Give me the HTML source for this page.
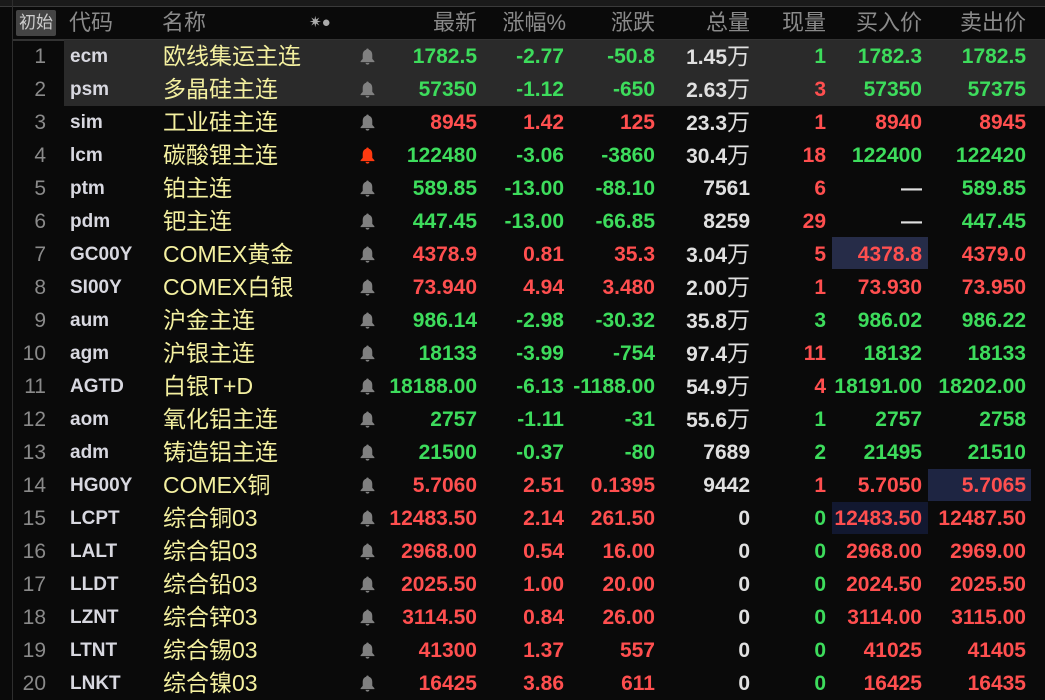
<!DOCTYPE html>
<html><head><meta charset="utf-8"><style>
body{margin:0;width:1045px;height:700px;background:#0a0a0a;overflow:hidden;position:relative;font-family:"Liberation Sans","Noto Sans CJK SC",sans-serif}
.top{position:absolute;left:0;top:0;width:1045px;height:6px;background:#1a1a1a;border-bottom:1px solid #3a3a3a}
.vl{position:absolute;left:12px;top:0;width:1px;height:700px;background:#2e2e2e}
.hd{position:absolute;top:7px;height:32px;left:13px;right:0;border-bottom:2px solid #333;color:#8a8a8a;font-size:22px}
.hd span{position:absolute;top:2px;line-height:28px}
.btn{left:3px;top:3px!important;background:#444;color:#ccc;font-size:17px;padding:0 3px;border-radius:2px;line-height:26px!important}
.r{position:absolute;left:13px;right:0;height:33px;font-size:21px;font-weight:bold}
.r span{position:absolute;top:0;line-height:33px;white-space:nowrap}
.n{right:calc(100% - 33px);color:#8a8a8a;font-weight:normal}
.c{left:57px;color:#d8d8e0;font-size:19px}
.m{left:150px;color:#f4f0a0;font-weight:normal;font-size:23px}
.b{left:347px;top:8px!important;line-height:0!important}
.a{right:568px}.p{right:481px}.d{right:390px}.v{right:295px;color:#e0e0e0}.v i{font-style:normal;font-weight:normal;font-size:23px}
.q{right:219px}.y{right:123px}.s{right:19px}
.G{color:#3ddc5c}.R{color:#ff4f4f}.W{color:#e0e0e0}
.box{position:absolute;height:32px}
</style></head><body>
<div class="top"></div><div class="vl"></div>
<div class="hd">
<span class="btn">初始</span><span style="left:56px">代码</span><span style="left:149px">名称</span>
<span style="left:296px;font-size:15px;color:#aaa">✷●</span>
<span style="right:568px">最新</span><span style="right:479px">涨幅%</span><span style="right:390px">涨跌</span><span style="right:295px">总量</span><span style="right:219px">现量</span><span style="right:123px">买入价</span><span style="right:19px">卖出价</span>
</div>
<div class="box" style="left:64px;top:40px;width:981px;height:66px;background:#2a2a2a"></div>
<div class="box" style="left:832px;top:237px;width:96px;background:#262c48"></div>
<div class="box" style="left:928px;top:469px;width:103px;background:#1e2542"></div>
<div class="box" style="left:832px;top:502px;width:96px;background:#121830"></div>
<svg width="0" height="0" style="position:absolute"><defs><symbol id="bell" viewBox="0 0 14 16"><path d="M7 0.5c0.8 0 1.2 0.6 1.2 1.2 2.3 0.6 3.3 2.5 3.3 5v3.5l2 2.3v0.8H0.5v-0.8l2-2.3V6.7c0-2.5 1-4.4 3.3-5C5.8 1.1 6.2 0.5 7 0.5zM5.2 14h3.6c0 1-0.8 1.6-1.8 1.6S5.2 15 5.2 14z"/></symbol></defs></svg>

<div class="r" style="top:40px"><span class="n">1</span><span class="c">ecm</span><span class="m">欧线集运主连</span><span class="b"><svg width="15" height="17" fill="#808080"><use href="#bell"/></svg></span><span class="a G">1782.5</span><span class="p G">-2.77</span><span class="d G">-50.8</span><span class="v">1.45<i>万</i></span><span class="q G">1</span><span class="y G">1782.3</span><span class="s G">1782.5</span></div>
<div class="r" style="top:73px"><span class="n">2</span><span class="c">psm</span><span class="m">多晶硅主连</span><span class="b"><svg width="15" height="17" fill="#808080"><use href="#bell"/></svg></span><span class="a G">57350</span><span class="p G">-1.12</span><span class="d G">-650</span><span class="v">2.63<i>万</i></span><span class="q R">3</span><span class="y G">57350</span><span class="s G">57375</span></div>
<div class="r" style="top:106px"><span class="n">3</span><span class="c">sim</span><span class="m">工业硅主连</span><span class="b"><svg width="15" height="17" fill="#808080"><use href="#bell"/></svg></span><span class="a R">8945</span><span class="p R">1.42</span><span class="d R">125</span><span class="v">23.3<i>万</i></span><span class="q R">1</span><span class="y R">8940</span><span class="s R">8945</span></div>
<div class="r" style="top:139px"><span class="n">4</span><span class="c">lcm</span><span class="m">碳酸锂主连</span><span class="b"><svg width="15" height="17" fill="#ff3a10"><use href="#bell"/></svg></span><span class="a G">122480</span><span class="p G">-3.06</span><span class="d G">-3860</span><span class="v">30.4<i>万</i></span><span class="q R">18</span><span class="y G">122400</span><span class="s G">122420</span></div>
<div class="r" style="top:172px"><span class="n">5</span><span class="c">ptm</span><span class="m">铂主连</span><span class="b"><svg width="15" height="17" fill="#808080"><use href="#bell"/></svg></span><span class="a G">589.85</span><span class="p G">-13.00</span><span class="d G">-88.10</span><span class="v">7561</span><span class="q R">6</span><span class="y W">—</span><span class="s G">589.85</span></div>
<div class="r" style="top:205px"><span class="n">6</span><span class="c">pdm</span><span class="m">钯主连</span><span class="b"><svg width="15" height="17" fill="#808080"><use href="#bell"/></svg></span><span class="a G">447.45</span><span class="p G">-13.00</span><span class="d G">-66.85</span><span class="v">8259</span><span class="q R">29</span><span class="y W">—</span><span class="s G">447.45</span></div>
<div class="r" style="top:238px"><span class="n">7</span><span class="c">GC00Y</span><span class="m">COMEX黄金</span><span class="b"><svg width="15" height="17" fill="#808080"><use href="#bell"/></svg></span><span class="a R">4378.9</span><span class="p R">0.81</span><span class="d R">35.3</span><span class="v">3.04<i>万</i></span><span class="q R">5</span><span class="y R">4378.8</span><span class="s R">4379.0</span></div>
<div class="r" style="top:271px"><span class="n">8</span><span class="c">SI00Y</span><span class="m">COMEX白银</span><span class="b"><svg width="15" height="17" fill="#808080"><use href="#bell"/></svg></span><span class="a R">73.940</span><span class="p R">4.94</span><span class="d R">3.480</span><span class="v">2.00<i>万</i></span><span class="q R">1</span><span class="y R">73.930</span><span class="s R">73.950</span></div>
<div class="r" style="top:304px"><span class="n">9</span><span class="c">aum</span><span class="m">沪金主连</span><span class="b"><svg width="15" height="17" fill="#808080"><use href="#bell"/></svg></span><span class="a G">986.14</span><span class="p G">-2.98</span><span class="d G">-30.32</span><span class="v">35.8<i>万</i></span><span class="q G">3</span><span class="y G">986.02</span><span class="s G">986.22</span></div>
<div class="r" style="top:337px"><span class="n">10</span><span class="c">agm</span><span class="m">沪银主连</span><span class="b"><svg width="15" height="17" fill="#808080"><use href="#bell"/></svg></span><span class="a G">18133</span><span class="p G">-3.99</span><span class="d G">-754</span><span class="v">97.4<i>万</i></span><span class="q R">11</span><span class="y G">18132</span><span class="s G">18133</span></div>
<div class="r" style="top:370px"><span class="n">11</span><span class="c">AGTD</span><span class="m">白银T+D</span><span class="b"><svg width="15" height="17" fill="#808080"><use href="#bell"/></svg></span><span class="a G">18188.00</span><span class="p G">-6.13</span><span class="d G">-1188.00</span><span class="v">54.9<i>万</i></span><span class="q R">4</span><span class="y G">18191.00</span><span class="s G">18202.00</span></div>
<div class="r" style="top:403px"><span class="n">12</span><span class="c">aom</span><span class="m">氧化铝主连</span><span class="b"><svg width="15" height="17" fill="#808080"><use href="#bell"/></svg></span><span class="a G">2757</span><span class="p G">-1.11</span><span class="d G">-31</span><span class="v">55.6<i>万</i></span><span class="q G">1</span><span class="y G">2757</span><span class="s G">2758</span></div>
<div class="r" style="top:436px"><span class="n">13</span><span class="c">adm</span><span class="m">铸造铝主连</span><span class="b"><svg width="15" height="17" fill="#808080"><use href="#bell"/></svg></span><span class="a G">21500</span><span class="p G">-0.37</span><span class="d G">-80</span><span class="v">7689</span><span class="q G">2</span><span class="y G">21495</span><span class="s G">21510</span></div>
<div class="r" style="top:469px"><span class="n">14</span><span class="c">HG00Y</span><span class="m">COMEX铜</span><span class="b"><svg width="15" height="17" fill="#808080"><use href="#bell"/></svg></span><span class="a R">5.7060</span><span class="p R">2.51</span><span class="d R">0.1395</span><span class="v">9442</span><span class="q R">1</span><span class="y R">5.7050</span><span class="s R">5.7065</span></div>
<div class="r" style="top:502px"><span class="n">15</span><span class="c">LCPT</span><span class="m">综合铜03</span><span class="b"><svg width="15" height="17" fill="#808080"><use href="#bell"/></svg></span><span class="a R">12483.50</span><span class="p R">2.14</span><span class="d R">261.50</span><span class="v">0</span><span class="q G">0</span><span class="y R">12483.50</span><span class="s R">12487.50</span></div>
<div class="r" style="top:535px"><span class="n">16</span><span class="c">LALT</span><span class="m">综合铝03</span><span class="b"><svg width="15" height="17" fill="#808080"><use href="#bell"/></svg></span><span class="a R">2968.00</span><span class="p R">0.54</span><span class="d R">16.00</span><span class="v">0</span><span class="q G">0</span><span class="y R">2968.00</span><span class="s R">2969.00</span></div>
<div class="r" style="top:568px"><span class="n">17</span><span class="c">LLDT</span><span class="m">综合铅03</span><span class="b"><svg width="15" height="17" fill="#808080"><use href="#bell"/></svg></span><span class="a R">2025.50</span><span class="p R">1.00</span><span class="d R">20.00</span><span class="v">0</span><span class="q G">0</span><span class="y R">2024.50</span><span class="s R">2025.50</span></div>
<div class="r" style="top:601px"><span class="n">18</span><span class="c">LZNT</span><span class="m">综合锌03</span><span class="b"><svg width="15" height="17" fill="#808080"><use href="#bell"/></svg></span><span class="a R">3114.50</span><span class="p R">0.84</span><span class="d R">26.00</span><span class="v">0</span><span class="q G">0</span><span class="y R">3114.00</span><span class="s R">3115.00</span></div>
<div class="r" style="top:634px"><span class="n">19</span><span class="c">LTNT</span><span class="m">综合锡03</span><span class="b"><svg width="15" height="17" fill="#808080"><use href="#bell"/></svg></span><span class="a R">41300</span><span class="p R">1.37</span><span class="d R">557</span><span class="v">0</span><span class="q G">0</span><span class="y R">41025</span><span class="s R">41405</span></div>
<div class="r" style="top:667px"><span class="n">20</span><span class="c">LNKT</span><span class="m">综合镍03</span><span class="b"><svg width="15" height="17" fill="#808080"><use href="#bell"/></svg></span><span class="a R">16425</span><span class="p R">3.86</span><span class="d R">611</span><span class="v">0</span><span class="q G">0</span><span class="y R">16425</span><span class="s R">16435</span></div>
</body></html>
